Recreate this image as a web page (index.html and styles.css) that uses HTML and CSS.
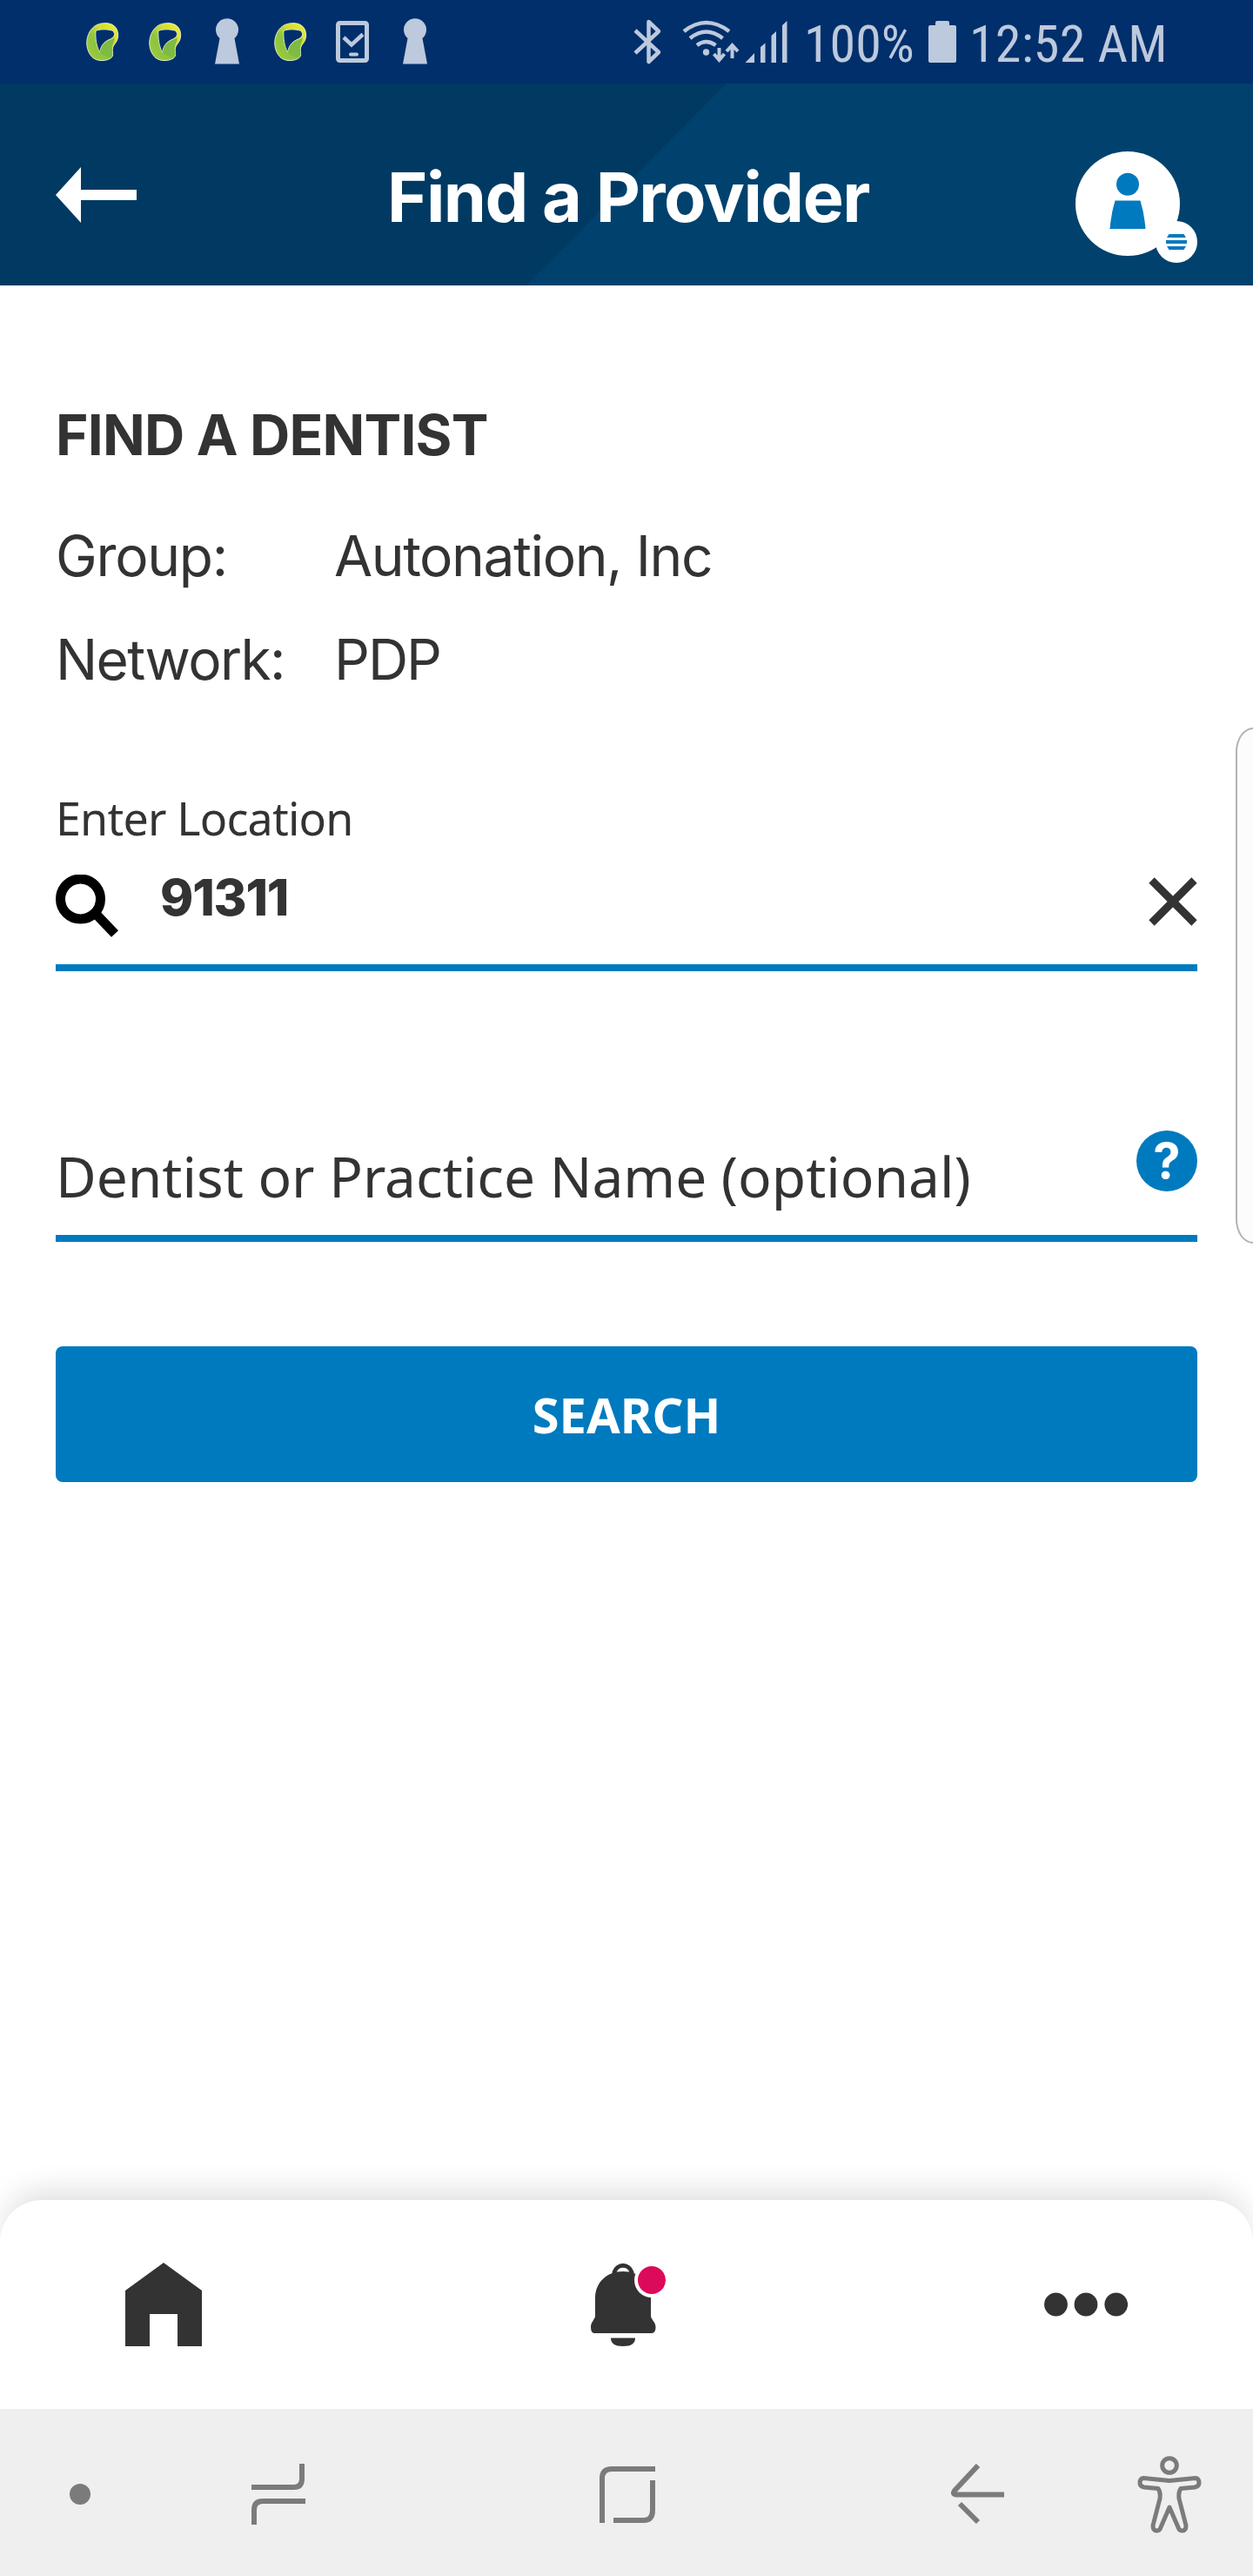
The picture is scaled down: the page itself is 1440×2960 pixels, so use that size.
FILE: index.html
```html
<!DOCTYPE html>
<html lang="en">
<head>
<meta charset="utf-8">
<title>Find a Provider</title>
<link rel="stylesheet" href="styles.css">
</head>
<body>
<svg class="defs" aria-hidden="true">
  <defs>
    <linearGradient id="leaf" x1="1" y1="0" x2="0" y2="1">
      <stop offset="0" stop-color="#f0ee35"/>
      <stop offset=".35" stop-color="#d3dd30"/>
      <stop offset=".6" stop-color="#8fc440"/>
      <stop offset="1" stop-color="#a5cc38"/>
    </linearGradient>
    <symbol id="loop" viewBox="0 0 216 288">
      <path d="M116 80C147 78 165 96 164 123C163 147 147 152 145 168C144 180 150 190 141 199C125 212 91 213 75 197C53 175 50 136 67 108C79 89 94 81 116 80ZM87 106C85 132 90 162 101 180C105 156 116 145 132 137C152 130 157 118 146 106C126 100 104 100 87 106Z" fill="url(#leaf)" fill-rule="evenodd" stroke="#f4fbe0" stroke-width="2.500"/>
      <path d="M102 181C106 158 117 147 133 139C141 136 147 133 151 129C155 141 143 150 143 168C144 180 148 190 140 197C127 199 113 193 102 181Z" fill="#7dbb42"/>
      <path d="M84 108C84 134 90 164 101 182C112 193 125 199 139 198C124 210 93 205 79 183C66 160 66 128 84 108Z" fill="#8cc63f" opacity=".6"/>
    </symbol>
    <symbol id="keyhole" viewBox="0 0 72 96">
      <path d="M27.500 44A13 13 0 1 1 44.500 44L50 73.500H22Z" fill="#bdc9dc"/>
    </symbol>
  </defs>
</svg>
<div class="screen">
  <div class="status">
    <svg class="notice"><use href="#loop"/></svg>
    <svg class="notice"><use href="#loop"/></svg>
    <svg class="notice"><use href="#keyhole"/></svg>
    <svg class="notice"><use href="#loop"/></svg>
    <svg class="notice" viewBox="0 0 72 96" fill="none" stroke="#bdc9dc">
      <rect x="19.500" y="26.500" width="33" height="43" rx="2" stroke-width="5"/>
      <path d="M26 43L35 51.500L48 39.500" stroke-width="4.500"/>
      <path d="M34 62.500H41" stroke-width="4" stroke-linecap="round"/>
    </svg>
    <svg class="notice"><use href="#keyhole"/></svg>
    <svg class="bluetooth" viewBox="0 0 40 96" fill="none" stroke="#bdc9dc" stroke-width="4.500" stroke-linejoin="round">
      <path d="M6 35L33 60L21.500 71V25L33 36L6 61"/>
    </svg>
    <svg class="signal" viewBox="0 0 122 96" fill="none" stroke="#bdc9dc" stroke-width="4.500">
      <path d="M2 36Q27.500 16 54 36M9 44Q27.500 29 46.500 44M17 52Q27.500 44 38.500 52"/>
      <circle cx="27.500" cy="60" r="3.700" fill="#bdc9dc" stroke="none"/>
      <path d="M42.500 55V68M36.500 62L42.500 69L48.500 62M57.500 67V53M51 59L57.500 52L64 59" stroke-width="4"/>
      <path d="M72.500 72L83 61V72ZM90 72V54L95.500 49.500V72ZM102.500 72V41L108 36V72ZM115 72V29L120.500 24V72Z" fill="#bdc9dc" stroke="none"/>
    </svg>
    <span class="percent">100%</span>
    <svg class="battery" viewBox="0 0 32 96"><path d="M2 29H8V26Q8 24 10 24H22Q24 24 24 26V29H30Q32 29 32 31V70Q32 72 30 72H2Q0 72 0 70V31Q0 29 2 29Z" fill="#bdc9dc"/></svg>
    <span class="clock">12:52 AM</span>
  </div>

  <header class="header">
    <svg class="back" viewBox="0 0 93 64"><path d="M0 32L29 0V26H93V38H29V64Z" fill="#fff"/></svg>
    <h1 class="title">Find a Provider</h1>
    <svg class="avatar" viewBox="0 0 140 128">
      <circle cx="60" cy="60" r="60" fill="#fff"/>
      <circle cx="116" cy="104" r="24" fill="#fff"/>
      <g fill="#007abf">
        <circle cx="60" cy="37.700" r="13"/>
        <path d="M45.500 56.500H74.500Q79 71 80.500 89H39.500Q41 71 45.500 56.500Z"/>
        <path d="M107.500 95H124.500L127 99H105ZM104 102H128V106H104ZM105 109H127L124.500 113H107.500Z"/>
      </g>
    </svg>
  </header>

  <main class="content">
    <h2 class="heading">FIND A DENTIST</h2>
    <dl class="details">
      <dt class="group">Group:</dt><dd class="company">Autonation, Inc</dd>
      <dt class="network">Network:</dt><dd class="plan">PDP</dd>
    </dl>
    <label class="label">Enter Location</label>
    <div class="field location">
      <svg class="search-icon" viewBox="0 0 72 72" fill="none" stroke="#000">
        <circle cx="28.500" cy="28" r="23" stroke-width="11"/>
        <path d="M47 46L68 68" stroke-width="11"/>
      </svg>
      <span class="zip">91311</span>
      <svg class="clear" viewBox="0 0 56 56"><path d="M3.500 3.500L52.500 52.500M52.500 3.500L3.500 52.500" stroke="#333" stroke-width="9"/></svg>
    </div>
    <div class="field practice">
      <span class="placeholder">Dentist or Practice Name (optional)</span>
      <span class="help">?</span>
    </div>
    <button class="search">SEARCH</button>
  </main>

  <nav class="tabs">
    <svg class="home" viewBox="0 0 88 96"><path d="M44 0L88 32V96H60V59H28V96H0V32Z" fill="#333"/></svg>
    <svg class="bell" viewBox="0 0 96 96">
      <path d="M34 16V11A10.500 11 0 0 1 54 11V16" fill="none" stroke="#333" stroke-width="5"/>
      <path d="M44 10C62 10 76 22 76 41V62C78 67 81.500 69 81.500 74Q81.500 81 77 81H11Q7 81 7 74C7 69 10 67 12 62V41C12 22 26 10 44 10Z" fill="#333"/>
      <path d="M30 86.500H58Q58 96 44 96Q30 96 30 86.500Z" fill="#333"/>
      <circle cx="77" cy="20" r="20" fill="#fff"/>
      <circle cx="77" cy="20" r="16" fill="#dc0a5a"/>
    </svg>
    <svg class="more" viewBox="0 0 96 28" fill="#333"><circle cx="13.500" cy="14" r="13.400"/><circle cx="48" cy="14" r="13.400"/><circle cx="82.700" cy="14" r="13.400"/></svg>
  </nav>

  <div class="system">
    <svg class="dot" viewBox="0 0 24 24"><circle cx="12" cy="12" r="12" fill="#7b7b7b"/></svg>
    <svg class="recents" viewBox="0 0 62 72" fill="none" stroke="#7b7b7b" stroke-width="6"><path d="M58 1V18Q58 28 49 28H0M62 44H13Q3 44 3 54V71"/></svg>
    <svg class="square" viewBox="0 0 64 68" fill="none" stroke="#7b7b7b" stroke-width="6"><path d="M64 5H14Q3 5 3 16V67M61 18V52Q61 64 51 64H16"/></svg>
    <svg class="sysback" viewBox="0 0 62 70" fill="none" stroke="#7b7b7b" stroke-width="6"><path d="M31 2L4 31Q1 35 6 35.500H61M10 46L31 67"/></svg>
    <svg class="access" viewBox="0 0 76 90" fill="none" stroke="#7b7b7b" stroke-width="5" stroke-linejoin="round">
      <circle cx="38" cy="12" r="8.300"/>
      <path d="M8 26.500L38 29.500L68 26.500Q72 27 72 32Q72 36 67 37L51 38.500Q48 43 49 50L57 81Q57 87 52.500 87Q49 87 48 83L38 60L28 83Q27 87 23.500 87Q19 87 19 81L27 50Q28 43 25 38.500L9 37Q4 36 4 32Q4 27 8 26.500Z"/>
    </svg>
  </div>
  <div class="edge"></div>
</div>
</body>
</html>
```
FILE: styles.css
```css
* { box-sizing: border-box; }
body { margin: 0; background: #fff; }
svg { display: block; flex: none; }
.defs { position: absolute; width: 0; height: 0; }

.screen {
  position: relative;
  display: flex;
  flex-direction: column;
  width: 1440px;
  height: 2960px;
  overflow: hidden;
  color: #333;
  font-family: Inter, sans-serif;
}

/* Android status bar */
.status {
  display: flex;
  height: 96px;
  padding-left: 81px;
  background: #002f6c;
  color: #bdc9dc;
  font: 400 60px/101px "Roboto Condensed", Roboto, sans-serif;
  white-space: nowrap;
}
.notice { width: 72px; height: 96px; }
.bluetooth { width: 40px; height: 96px; margin-left: 211px; }
.signal { width: 122px; height: 96px; margin-left: 20px; }
.percent { width: 134px; margin-left: 18px; }
.battery { width: 32px; height: 96px; margin-left: 9px; }
.clock { margin-left: 15px; letter-spacing: .200px; }

/* App header */
.header {
  display: grid;
  grid-template-columns: 140px 1fr 140px;
  align-items: start;
  height: 232px;
  padding: 78px 64px 0;
  background: linear-gradient(134.800deg, #003a62 calc(50% - .5px), #00426d calc(50% + .5px));
}
.back { width: 93px; height: 64px; margin-top: 18px; }
.title {
  margin: 12px 0 0 4px;
  color: #fff;
  font-size: 79px;
  font-weight: 700;
  line-height: 80px;
  letter-spacing: -1.500px;
  text-align: center;
  white-space: nowrap;
}
.avatar { width: 140px; height: 128px; }

/* Form */
.content { flex: 1; padding: 132px 64px 0; }
.heading { margin: 0; font-size: 64px; font-weight: 700; line-height: 80px; letter-spacing: -.800px; }
.details {
  display: grid;
  grid-template-columns: 320px 1fr;
  margin: 39px 0 93px;
  font-size: 64px;
  line-height: 119px;
}
.details dd { margin: 0; }
.group { letter-spacing: -1.300px; }
.company { letter-spacing: -1.400px; }
.network { letter-spacing: -1.600px; }
.plan { letter-spacing: -2px; }
.label { display: block; font: 400 52px/60px "Noto Sans", sans-serif; letter-spacing: -.800px; }
.field { display: flex; align-items: flex-start; border-bottom: 8px solid #007abf; }
.location { height: 146px; padding-top: 21px; }
.search-icon { width: 72px; height: 72px; margin-top: 14px; }
.zip { flex: 1; margin-left: 48px; font-size: 58px; font-weight: 800; line-height: 80px; letter-spacing: -1.200px; }
.clear { width: 56px; height: 56px; margin-top: 17px; }
.practice { height: 128px; margin-top: 183px; justify-content: space-between; }
.placeholder { margin-top: 13px; font: 400 64px/80px "Noto Sans", sans-serif; }
.help {
  width: 70px;
  height: 70px;
  border-radius: 50%;
  background: #007abf;
  color: #fff;
  font-size: 56px;
  font-weight: 700;
  line-height: 71px;
  text-align: center;
}
.search {
  display: block;
  width: 100%;
  height: 156px;
  margin-top: 120px;
  padding: 0;
  border: 0;
  border-radius: 8px;
  background: #007abf;
  color: #fff;
  font: 700 56px/154px "Noto Sans", sans-serif;
}

/* Tab bar */
.tabs {
  display: flex;
  height: 240px;
  padding: 72px 0 0 144px;
  border-radius: 48px 48px 0 0;
  background: #fff;
  box-shadow: 0 -16px 36px -8px rgba(0, 0, 0, .14);
}
.home { width: 88px; height: 96px; }
.bell { width: 96px; height: 96px; margin-left: 440px; }
.more { width: 96px; height: 28px; margin: 34px 0 0 432px; }

/* Android navigation bar */
.system {
  display: flex;
  align-items: center;
  height: 192px;
  padding: 4px 0 0 80px;
  background: #efefef;
  z-index: 1;
}
.dot { width: 24px; height: 24px; }
.recents { width: 62px; height: 72px; margin-left: 185px; }
.square { width: 64px; height: 68px; margin-left: 338px; }
.sysback { width: 62px; height: 70px; margin-left: 340px; }
.access { width: 76px; height: 90px; margin-left: 151px; }

/* Edge panel handle over the right side */
.edge {
  position: absolute;
  top: 836px;
  right: -20px;
  width: 40px;
  height: 593px;
  border: 2px solid #b3b3b3;
  border-radius: 20px / 28px;
  background: #fcfcfc;
}
```
